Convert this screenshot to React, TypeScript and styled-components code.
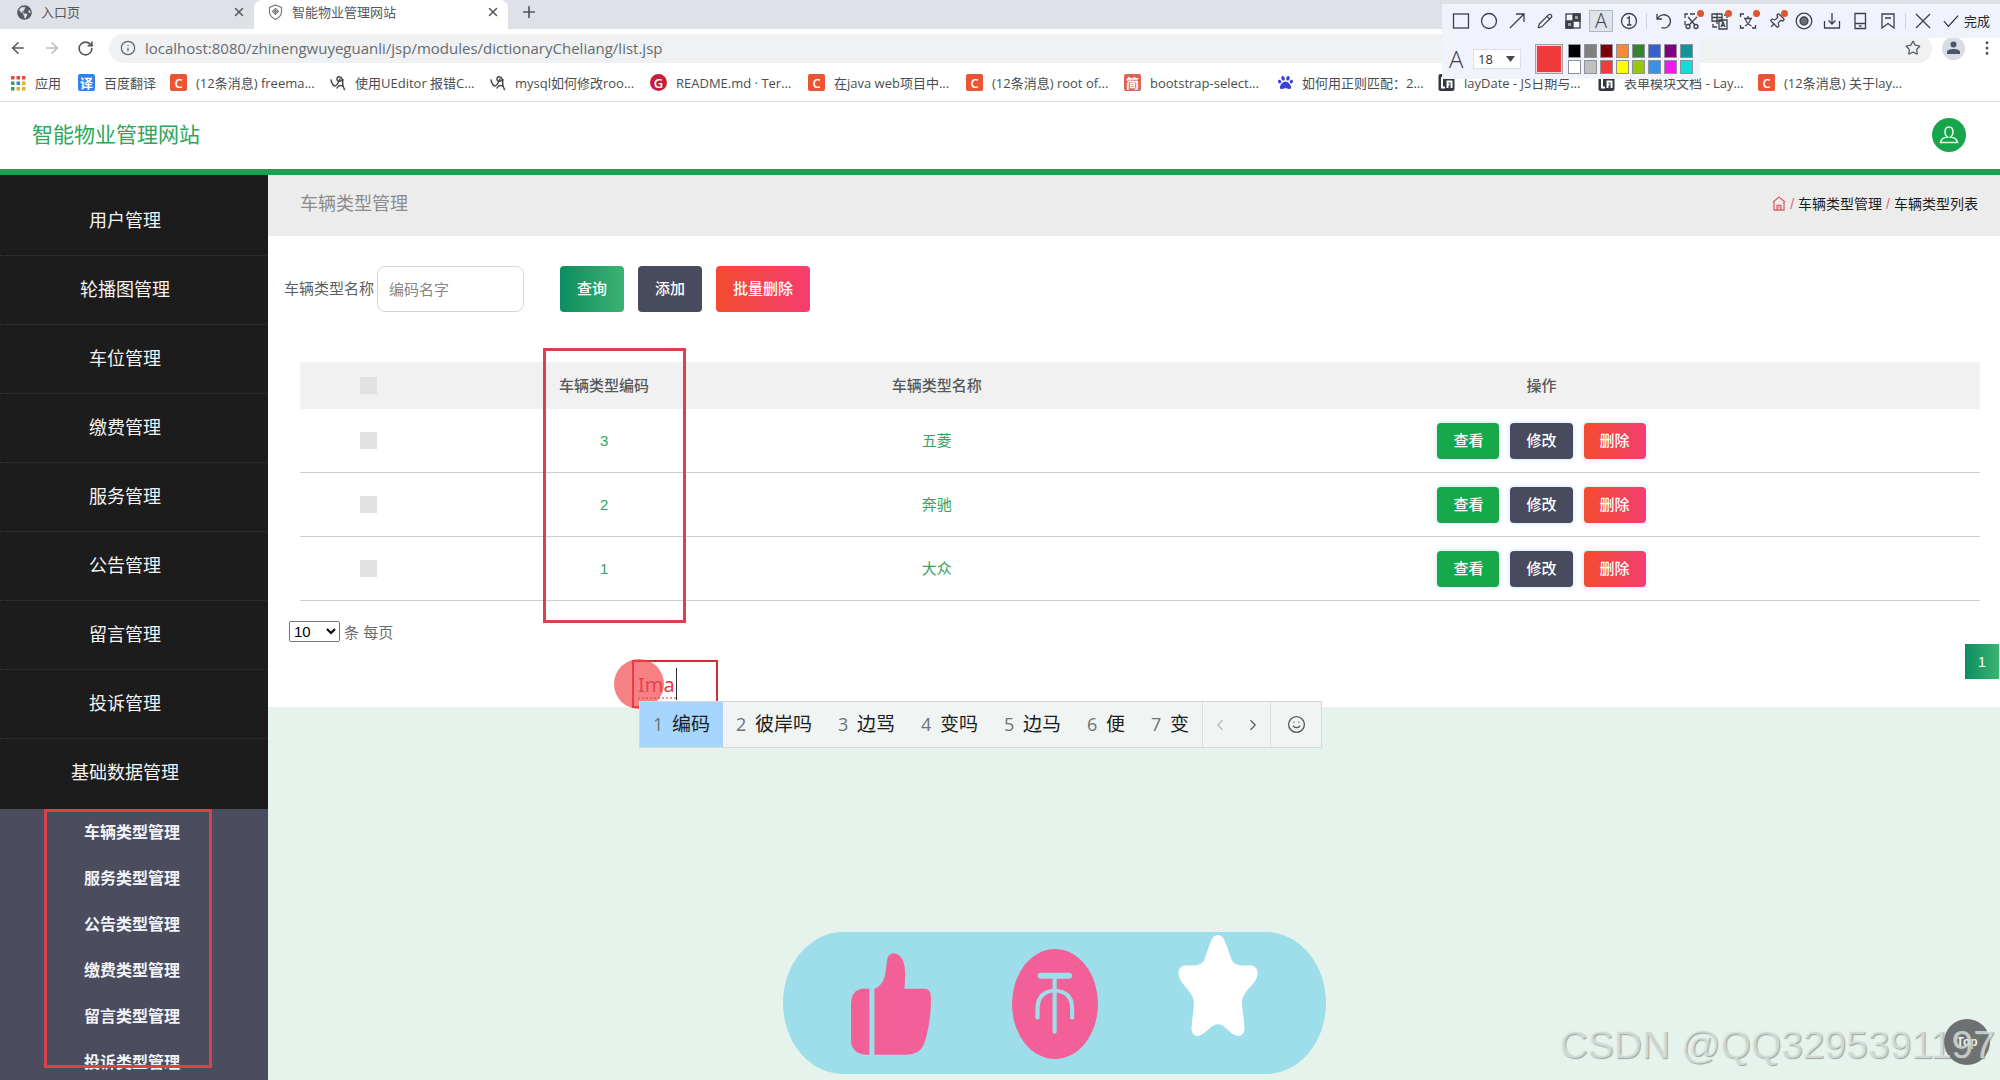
import React from 'react';
import styled, { createGlobalStyle, css } from 'styled-components';
import { ArrowLeft, ArrowRight, RotateCw, Info, X, Plus, Star, Pencil, Smile, ChevronLeft, ChevronRight, Pin, MoreVertical } from 'lucide-react';
import { FaPaw, FaGlobeAmericas } from 'react-icons/fa';

const siteFont = '"Liberation Sans", "Noto Sans CJK SC", sans-serif';
const chromeFont = '"Open Sans", "Noto Sans CJK SC", sans-serif';

const GlobalStyle = createGlobalStyle`
  * { box-sizing: border-box; }
  body { margin: 0; background: #e5f3ec; font-family: ${siteFont}; }
  button, input, select { font-family: inherit; margin: 0; }
  button { border: 0; padding: 0; background: none; cursor: pointer; }
  a { text-decoration: none; color: inherit; }
  ul { list-style: none; margin: 0; padding: 0; }
  svg { display: block; flex: none; }
`;

const Shell = styled.div`
  position: relative;
  display: flex;
  flex-direction: column;
  height: 100vh;
  overflow: hidden;
`;

/* ---------- browser ---------- */
const Browser = styled.header`
  flex: none;
  background: #fff;
  border-bottom: 1px solid #d9dbde;
  font-family: ${chromeFont};
`;
const TabStrip = styled.div`
  display: flex;
  height: 29px;
  background: #dee1e6;
`;
const Tab = styled.div<{ $active?: boolean }>`
  display: flex;
  align-items: center;
  gap: 9px;
  width: 254px;
  height: 29px;
  padding: 0 8px 5px 17px;
  font-size: 13px;
  line-height: 20px;
  color: #55585c;
  border-radius: 0 0 8px 0;
  ${p => p.$active && css`background: #fff; border-radius: 8px 8px 0 0; padding-left: 14px;`}
`;
const TabTitle = styled.span`
  flex: 1;
`;
const IconButton = styled.button`
  display: flex;
  align-items: center;
  justify-content: center;
  color: #54575b;
`;
const NewTab = styled(IconButton)`
  padding: 0 12px 5px;
`;
const Toolbar = styled.div`
  display: flex;
  align-items: center;
  gap: 16px;
  height: 34px;
  padding: 4px 4px 0 9px;
`;
const Address = styled.label`
  flex: 1;
  display: flex;
  align-items: center;
  gap: 9px;
  height: 29px;
  margin: 0 -6px 0 -1px;
  padding: 0 11px;
  border-radius: 15px;
  background: #eff1f3;
  color: #5f6368;
`;
const AddressInput = styled.input`
  flex: 1;
  border: 0;
  padding: 0;
  outline: 0;
  background: none;
  font-size: 15px;
  line-height: 24px;
  color: #686b6f;
`;
const Profile = styled.button`
  display: flex;
  align-items: center;
  justify-content: center;
  width: 23px;
  height: 23px;
  margin-right: -3px;
  border-radius: 50%;
  background: #d9dce4;
`;
const Bookmarks = styled.nav`
  display: flex;
  align-items: center;
  height: 38px;
  padding: 1px 0 0 10px;
`;
const Bookmark = styled.a<{ $width: number }>`
  flex: none;
  display: flex;
  align-items: center;
  gap: 9px;
  width: ${p => p.$width}px;
  font-size: 13px;
  line-height: 20px;
  white-space: nowrap;
  color: #4a4d51;
`;
const Favicon = styled.span<{ $bg: string; $round?: boolean }>`
  flex: none;
  display: flex;
  align-items: center;
  justify-content: center;
  width: 17px;
  height: 17px;
  border-radius: ${p => (p.$round ? '50%' : '2px')};
  background: ${p => p.$bg};
  color: #fff;
  font-size: 13px;
  line-height: 16px;
  font-weight: 600;
`;

/* ---------- site header ---------- */
const SiteHeader = styled.header`
  flex: none;
  display: flex;
  align-items: center;
  justify-content: space-between;
  height: 73px;
  padding: 0 34px 2px 32px;
  background: #fff;
  border-bottom: 6px solid #1fa152;
`;
const Brand = styled.a`
  font-size: 21px;
  line-height: 30px;
  color: #2ca75b;
`;
const UserButton = styled.button`
  display: flex;
  align-items: center;
  justify-content: center;
  width: 34px;
  height: 34px;
  border-radius: 50%;
  background: #17a54b;
`;
const Body = styled.div`
  flex: 1;
  min-height: 0;
  display: grid;
  grid-template-columns: 268px 1fr;
`;

/* ---------- sidebar ---------- */
const Sidebar = styled.nav`
  background: #4b4c5e;
  overflow: hidden;
`;
const Menu = styled.ul`
  padding: 12px 0 1px;
  background: #1c1c1c;
`;
const MenuItem = styled.li`
  border-bottom: 1px dotted #383838;
  &:last-child { border-bottom-color: transparent; }
`;
const MenuLink = styled.a`
  display: block;
  padding: 20px 18px 20px 0;
  font-size: 18px;
  line-height: 28px;
  text-align: center;
  color: #f4f4f4;
`;
const SubMenu = styled.ul`
  position: relative;
`;
const SubLink = styled.a`
  display: block;
  padding: 12px 4px 10px 0;
  font-size: 16px;
  line-height: 24px;
  font-weight: 700;
  text-align: center;
  color: #f1f3f8;
`;
const Marker = styled.span<{ $x: number; $y: number; $w: number; $h: number }>`
  position: absolute;
  left: ${p => p.$x}px;
  top: ${p => p.$y}px;
  width: ${p => p.$w}px;
  height: ${p => p.$h}px;
  border: 3px solid #d8434b;
  pointer-events: none;
`;

/* ---------- content ---------- */
const Main = styled.main`
  min-width: 0;
`;
const Crumbs = styled.div`
  display: flex;
  align-items: center;
  justify-content: space-between;
  height: 61px;
  padding: 0 22px 4px 32px;
  background: #ececec;
`;
const PageTitle = styled.h1`
  margin: 0;
  font-size: 18px;
  line-height: 26px;
  font-weight: 400;
  color: #8b8b8b;
`;
const Trail = styled.nav`
  display: flex;
  align-items: center;
  gap: 4px;
  font-size: 14px;
  line-height: 20px;
  color: #1d1d1d;
`;
const Slash = styled.span`
  color: #e2646c;
`;
const Panel = styled.section`
  padding-top: 30px;
  background: #fff;
`;
const SearchForm = styled.form`
  display: flex;
  align-items: center;
  gap: 14px;
  padding-left: 16px;
`;
const Field = styled.div`
  display: flex;
  align-items: center;
  gap: 3px;
  margin-right: 22px;
  font-size: 15px;
  line-height: 22px;
  color: #5a5e62;
`;
const TextInput = styled.input`
  width: 147px;
  height: 46px;
  padding: 0 11px;
  border: 1px solid #d3d6d9;
  border-radius: 8px;
  font-size: 15px;
  outline: 0;
  &::placeholder { color: #868686; }
`;
type Tone = 'teal' | 'green' | 'slate' | 'red';
const tones: Record<Tone, string> = {
  teal: 'linear-gradient(90deg, #0c8d61, #3cb371)',
  green: '#17a84a',
  slate: '#484b5e',
  red: 'linear-gradient(90deg, #f44a30, #f53e70)',
};
const Button = styled.button<{ $tone: Tone; $small?: boolean }>`
  height: ${p => (p.$small ? 36 : 46)}px;
  padding: 0 ${p => (p.$small ? 16 : 17)}px;
  border-radius: 4px;
  background: ${p => tones[p.$tone]};
  color: #fff;
  font-size: 15px;
  line-height: 22px;
  font-weight: 500;
  ${p => p.$small && css`box-shadow: 0 0 5px #bfe3f5;`}
`;
const TableWrap = styled.div`
  position: relative;
  margin: 50px 20px 0 32px;
`;
const Table = styled.table`
  width: 100%;
  table-layout: fixed;
  border-collapse: separate;
  border-spacing: 0;
  font-size: 15px;
  line-height: 22px;
  text-align: center;
`;
const Th = styled.th<{ $width?: string }>`
  width: ${p => p.$width || 'auto'};
  height: 47px;
  padding: 0;
  background: #f1f1f2;
  font-weight: 500;
  color: #55585b;
`;
const Td = styled.td`
  height: 64px;
  padding: 0;
  border-bottom: 1px solid #cdcfd1;
  color: #34a461;
`;
const Tick = styled.input`
  display: block;
  appearance: none;
  width: 17px;
  height: 17px;
  margin: 0 auto;
  background: #dfe1e3;
`;
const Actions = styled.div`
  display: flex;
  justify-content: center;
  gap: 11px;
`;
const Pager = styled.div`
  padding: 19px 1px 28px 21px;
`;
const PageSize = styled.label`
  display: flex;
  align-items: center;
  gap: 4px;
  height: 22px;
  margin-bottom: 2px;
  font-size: 15px;
  color: #6a6d70;
`;
const SizeSelect = styled.select`
  width: 51px;
  height: 21px;
  font-size: 15px;
  line-height: 18px;
  font-family: "Liberation Sans", sans-serif;
`;
const PageNumber = styled.button`
  display: block;
  width: 34px;
  height: 35px;
  margin-left: auto;
  background: ${tones.teal};
  color: #fff;
  font-size: 14px;
`;

/* ---------- capture tool ---------- */
const Capture = styled.div`
  position: absolute;
  top: 4px;
  right: 0;
  width: 558px;
  font-family: ${chromeFont};
`;
const CaptureRow = styled.div`
  display: flex;
  align-items: center;
  height: 34px;
  padding-left: 5px;
  background: #f0f3fc;
`;
const Tool = styled.button<{ $on?: boolean; $badge?: boolean }>`
  position: relative;
  display: flex;
  align-items: center;
  justify-content: center;
  width: 24px;
  height: 22px;
  margin: 0 2px;
  color: #3d4047;
  font-size: 20px;
  line-height: 20px;
  font-weight: 300;
  ${p => p.$on && css`background: #dfe3ea; border: 1px solid #b4b8bf;`}
  ${p => p.$badge && css`
    &::after {
      content: '';
      position: absolute;
      top: 0;
      right: 0;
      width: 7px;
      height: 7px;
      border-radius: 50%;
      background: #e2562b;
    }
  `}
`;
const ToolDivider = styled.span`
  width: 1px;
  height: 16px;
  margin: 0 3px;
  background: #cfd3dc;
`;
const Done = styled.button`
  display: flex;
  align-items: center;
  gap: 5px;
  margin-left: 6px;
  font-size: 13px;
  line-height: 20px;
  color: #26282c;
  white-space: nowrap;
`;
const StylePanel = styled.div`
  display: flex;
  align-items: center;
  width: 258px;
  height: 41px;
  padding-left: 7px;
  background: #f0f3fc;
`;
const StyleLetter = styled.span`
  width: 24px;
  font-size: 24px;
  line-height: 28px;
  font-weight: 300;
  color: #3d4047;
`;
const FontSelectBox = styled.span`
  position: relative;
  display: flex;
  align-items: center;
  margin-right: 14px;
  & > svg { position: absolute; right: 6px; pointer-events: none; }
`;
const FontSelect = styled.select`
  appearance: none;
  width: 48px;
  height: 20px;
  padding: 0 4px;
  border: 1px solid #dcdfe6;
  background: #fff;
  font-size: 13px;
  color: #303338;
`;
const CurrentColor = styled.button`
  width: 28px;
  height: 30px;
  margin-right: 5px;
  border: 1px solid #9ea2a8;
  background: #f13a3c;
  box-shadow: inset 0 0 0 1px #f0d6da;
`;
const Palette = styled.div`
  display: grid;
  grid-template-columns: repeat(8, 13px);
  gap: 2px 3px;
`;
const Swatch = styled.button<{ $color: string }>`
  height: 14px;
  border: 1px solid #8f9298;
  background: ${p => p.$color};
`;

/* ---------- typing annotation ---------- */
const Typing = styled.div`
  position: absolute;
  left: 632px;
  top: 660px;
  display: flex;
  width: 86px;
  height: 48px;
  padding: 6px 0 0 4px;
  border: 2px solid #dc2a30;
`;
const Pointer = styled.span`
  position: absolute;
  left: 614px;
  top: 659px;
  width: 50px;
  height: 50px;
  border-radius: 50%;
  background: rgba(240, 70, 75, 0.68);
`;
const TypingInput = styled.input`
  width: 38px;
  height: 31px;
  padding: 3px 0 0;
  border: 0;
  border-bottom: 2px dotted #ee8f90;
  outline: 0;
  background: none;
  font-family: "Noto Sans", sans-serif;
  font-size: 20px;
  line-height: 26px;
  color: #e0393e;
`;
const Caret = styled.span`
  width: 1px;
  height: 32px;
  background: #333;
`;
const Ime = styled.div`
  position: absolute;
  left: 639px;
  top: 701px;
  display: flex;
  height: 47px;
  border: 1px solid #d4d9d7;
  background: #f0f4f2;
  font-family: ${chromeFont};
`;
const Candidate = styled.button<{ $on?: boolean }>`
  display: flex;
  align-items: center;
  gap: 9px;
  padding: 0 13px 1px;
  font-size: 19px;
  line-height: 28px;
  color: #1b1d1f;
  background: ${p => (p.$on ? '#a6d5fd' : 'transparent')};
`;
const Order = styled.span`
  width: 10px;
  font-size: 18px;
  color: #6b7377;
`;
const ImeTools = styled.div`
  display: flex;
  align-items: center;
  justify-content: space-around;
  border-left: 1px solid #d9dddb;
  width: 68px;
  &:last-child { width: 51px; }
`;

/* ---------- floating reactions ---------- */
const Reactions = styled.div`
  position: absolute;
  left: 783px;
  bottom: 6px;
  display: flex;
  align-items: flex-start;
  justify-content: space-between;
  width: 543px;
  height: 142px;
  padding: 3px 68px 0;
  border-radius: 60px / 71px;
  background: #9eddea;
`;
const Reaction = styled.button<{ $drop: number }>`
  padding-top: ${p => p.$drop}px;
`;
const TopButton = styled.button`
  position: absolute;
  right: 10px;
  bottom: 15px;
  width: 46px;
  height: 46px;
  border-radius: 50%;
  background: #6e7171;
  color: #f2f2f2;
  font-size: 12px;
  font-weight: 700;
`;
const Watermark = styled.span`
  position: absolute;
  right: 5px;
  bottom: 12px;
  font-size: 39px;
  line-height: 46px;
  white-space: nowrap;
  color: rgba(229, 238, 234, 0.7);
  text-shadow: 1px 1px 1px rgba(130, 138, 134, 0.75);
  pointer-events: none;
`;

const Line = ({ children, w = 18 }: { children: React.ReactNode; w?: number }) => (
  <svg width={w} height={18} viewBox="0 0 18 18" fill="none" stroke="currentColor" strokeWidth="1.3">{children}</svg>
);

const Swirl = () => (
  <svg width="16" height="16" viewBox="0 0 16 16" fill="none" stroke="#4b4b4b" strokeWidth="1.5" strokeLinecap="round">
    <path d="M1 5c1 4 2 6 4 6s3-3 5-7" />
    <path d="M12 4c-1-3-5-3-5 0s4 3 6 0c-1 5 0 8 1.500 10.500" />
    <path d="M13 11c-3-1-5 0-6 2" />
  </svg>
);

const LayIcon = () => (
  <svg width="17" height="17" viewBox="0 0 16 17">
    <rect width="16" height="17" rx="2" fill="#34373c" />
    <path d="M3.500 3v10.500h3M9 14V7.500h4V14M9 10.500h2" fill="none" stroke="#fff" strokeWidth="2" />
  </svg>
);

const appsColors = ['#de4a3e', '#de4a3e', '#de4a3e', '#3f9b5a', '#3b7de0', '#e2b032', '#3f9b5a', '#e2b032', '#e2b032'];
const AppsIcon = () => (
  <svg width="16" height="16" viewBox="0 0 16 16">
    {appsColors.map((c, i) => (
      <rect key={i} x={1 + (i % 3) * 5.500} y={1 + Math.floor(i / 3) * 5.500} width="3.500" height="3.500" fill={c} />
    ))}
  </svg>
);

const C = () => <Favicon $bg="#ea5535">C</Favicon>;

const bookmarks: { icon: React.ReactNode; text: string; width: number }[] = [
  { icon: <AppsIcon />, text: '应用', width: 68 },
  { icon: <Favicon $bg="#2f83ea">译</Favicon>, text: '百度翻译', width: 92 },
  { icon: <C />, text: '(12条消息) freema...', width: 160 },
  { icon: <Swirl />, text: '使用UEditor 报错C...', width: 160 },
  { icon: <Swirl />, text: 'mysql如何修改roo...', width: 160 },
  { icon: <Favicon $bg="#c4203a" $round>G</Favicon>, text: 'README.md · Ter...', width: 158 },
  { icon: <C />, text: '在java web项目中...', width: 158 },
  { icon: <C />, text: '(12条消息) root of...', width: 158 },
  { icon: <Favicon $bg="#dd6356">简</Favicon>, text: 'bootstrap-select...', width: 154 },
  { icon: <FaPaw size={15} color="#3a40d8" />, text: '如何用正则匹配：2...', width: 160 },
  { icon: <LayIcon />, text: 'layDate - JS日期与...', width: 160 },
  { icon: <LayIcon />, text: '表单模块文档 - Lay...', width: 160 },
  { icon: <C />, text: '(12条消息) 关于lay...', width: 160 },
];

const menu = ['用户管理', '轮播图管理', '车位管理', '缴费管理', '服务管理', '公告管理', '留言管理', '投诉管理', '基础数据管理'];
const submenu = ['车辆类型管理', '服务类型管理', '公告类型管理', '缴费类型管理', '留言类型管理', '投诉类型管理'];
const rows = [
  { code: '3', name: '五菱' },
  { code: '2', name: '奔驰' },
  { code: '1', name: '大众' },
];
const palette = [
  '#000000', '#808080', '#7b0008', '#f88a35', '#33842c', '#3460d2', '#800080', '#12939a',
  '#ffffff', '#bfbfbf', '#f13a3c', '#ffff00', '#98c80c', '#3893e6', '#f418f0', '#14dcd8',
];
const candidates = ['编码', '彼岸吗', '边骂', '变吗', '边马', '便', '变'];

const BrowserChrome = () => (
  <Browser>
    <TabStrip>
      <Tab>
        <FaGlobeAmericas size={15} />
        <TabTitle>入口页</TabTitle>
        <IconButton aria-label="关闭"><X size={14} strokeWidth={2.500} /></IconButton>
      </Tab>
      <Tab $active>
        <svg width="15" height="16" viewBox="0 0 15 16" fill="none" stroke="#777a7e" strokeWidth="1.200">
          <path d="M7.500 1 13.500 3.500V8c0 4-3 6-6 7.500C4.500 14 1.500 12 1.500 8V3.500Z" />
          <path d="M7.500 4.500 10.500 7.500 7.500 10.500 4.500 7.500ZM7.500 6v3M6 7.500h3" />
        </svg>
        <TabTitle>智能物业管理网站</TabTitle>
        <IconButton aria-label="关闭"><X size={14} strokeWidth={2.500} /></IconButton>
      </Tab>
      <NewTab aria-label="新标签页"><Plus size={18} strokeWidth={2.300} /></NewTab>
    </TabStrip>
    <Toolbar>
      <IconButton aria-label="后退"><ArrowLeft size={18} /></IconButton>
      <IconButton aria-label="前进"><ArrowRight size={18} color="#b9bbbe" /></IconButton>
      <IconButton aria-label="刷新"><RotateCw size={17} strokeWidth={2.300} /></IconButton>
      <Address>
        <Info size={16} strokeWidth={1.800} />
        <AddressInput aria-label="地址" defaultValue="localhost:8080/zhinengwuyeguanli/jsp/modules/dictionaryCheliang/list.jsp" />
        <Star size={16} />
      </Address>
      <Profile aria-label="用户">
        <svg width="13" height="14" viewBox="0 0 13 14" fill="#4c5568"><circle cx="6.500" cy="3.500" r="3" /><path d="M0 13V11c0-2 3-3 6.500-3s6.500 1 6.500 3v2Z" /></svg>
      </Profile>
      <IconButton aria-label="更多"><MoreVertical size={18} fill="currentColor" /></IconButton>
    </Toolbar>
    <Bookmarks>
      {bookmarks.map((b, i) => (
        <Bookmark key={i} href="#" $width={b.width}>{b.icon}<span>{b.text}</span></Bookmark>
      ))}
    </Bookmarks>
  </Browser>
);

const CaptureTools = () => (
  <Capture>
    <CaptureRow>
      <Tool aria-label="矩形"><Line><rect x="1.500" y="2" width="15" height="14" /></Line></Tool>
      <Tool aria-label="椭圆"><Line><circle cx="9" cy="9" r="7.500" /></Line></Tool>
      <Tool aria-label="箭头"><Line><path d="M2 16 16 2M8 2h8v8" /></Line></Tool>
      <Tool aria-label="画笔"><Pencil size={16} strokeWidth={1.800} /></Tool>
      <Tool aria-label="马赛克"><Line><rect x="2" y="2" width="14" height="14" /><path d="M9 2h7v7H9ZM2 9h7v7H2Z" fill="currentColor" /><path d="M11 4h3v3h-3ZM4 11h3v3H4Z" fill="#9a9da4" stroke="none" /></Line></Tool>
      <Tool $on>A</Tool>
      <Tool aria-label="序号"><Line><circle cx="9" cy="9" r="7.500" /><path d="M7 6.500 9.300 5v8M7 13h4.500" /></Line></Tool>
      <ToolDivider />
      <Tool aria-label="撤销"><Line><path d="M2 2v5h5M2.500 6.500C5 2.500 10 1.500 13.500 4.500c3 3 2.500 8-1 10.500-2 1.300-4 1.300-6 .5" /></Line></Tool>
      <Tool $badge aria-label="裁剪"><Line><path d="M2 6V2h3M2 9v4M7 2h5M5 5l7 8M14 5l-8 8" /><circle cx="5" cy="14.500" r="2" /><circle cx="13" cy="14.500" r="2" /></Line></Tool>
      <Tool $badge aria-label="翻译"><Line><path d="M1 2h10v7H1ZM6 1v11M1 5.500h10M8 8h8v9H8ZM10 15l2-5 2 5M11 13.500h2M2 12v3h4M13 3h3v3" /></Line></Tool>
      <Tool $badge aria-label="文字识别"><Line><path d="M1.500 5V2H5M1.500 13v3H5M16.500 13v3H13M5 6.500h8M9 4v2.500M6 14c3-1.500 5-4 5.500-7.500M6.500 7c.5 3 3 5.500 6 7" /></Line></Tool>
      <Tool $badge aria-label="固定"><Pin size={17} strokeWidth={1.700} transform="rotate(45)" /></Tool>
      <Tool aria-label="录制"><Line><circle cx="9" cy="9" r="7.800" /><circle cx="9" cy="9" r="4" fill="#6c6f75" /></Line></Tool>
      <Tool aria-label="下载"><Line><path d="M9 1v11M5.500 8.500 9 12l3.500-3.500M1.500 9v7h15V9" /></Line></Tool>
      <Tool aria-label="手机"><Line><path d="M4 1.500h10.500v15H4ZM4 11.500h10.500M8 14h2.500" /></Line></Tool>
      <Tool aria-label="收藏"><Line><path d="M3 2h12v14l-6-4.500L3 16ZM6 6h6" /></Line></Tool>
      <ToolDivider />
      <Tool aria-label="取消"><Line><path d="m2 2 14 14M16 2 2 16" /></Line></Tool>
      <Done><Line w={16}><path d="m1 9 5 6L17 3" /></Line>完成</Done>
    </CaptureRow>
    <StylePanel>
      <StyleLetter>A</StyleLetter>
      <FontSelectBox>
        <FontSelect aria-label="字号" defaultValue="18"><option>18</option></FontSelect>
        <svg width="9" height="6" viewBox="0 0 9 6"><path d="M0 0h9L4.500 6Z" fill="#44474c" /></svg>
      </FontSelectBox>
      <CurrentColor aria-label="当前颜色" />
      <Palette>
        {palette.map(c => <Swatch key={c} $color={c} aria-label={c} />)}
      </Palette>
    </StylePanel>
  </Capture>
);

const SideNav = () => (
  <Sidebar>
    <Menu>
      {menu.map(m => <MenuItem key={m}><MenuLink href="#">{m}</MenuLink></MenuItem>)}
    </Menu>
    <SubMenu>
      {submenu.map(m => <li key={m}><SubLink href="#">{m}</SubLink></li>)}
      <Marker $x={44} $y={0} $w={168} $h={259} />
    </SubMenu>
  </Sidebar>
);

const Content = () => (
  <Main>
    <Crumbs>
      <PageTitle>车辆类型管理</PageTitle>
      <Trail>
        <svg width="14" height="15" viewBox="0 0 14 15" fill="none" stroke="#d9636b" strokeWidth="1.300">
          <path d="M1 6 7 1l6 5M2 5.500V14h10V5.500M5 14V9.500h4V14M7 11v1.500" />
        </svg>
        <Slash>/</Slash><a href="#">车辆类型管理</a><Slash>/</Slash><a href="#">车辆类型列表</a>
      </Trail>
    </Crumbs>
    <Panel>
      <SearchForm onSubmit={e => e.preventDefault()}>
        <Field>
          <label htmlFor="type-name">车辆类型名称</label>
          <TextInput id="type-name" placeholder="编码名字" />
        </Field>
        <Button type="submit" $tone="teal">查询</Button>
        <Button type="button" $tone="slate">添加</Button>
        <Button type="button" $tone="red">批量删除</Button>
      </SearchForm>
      <TableWrap>
        <Table>
          <thead>
            <tr>
              <Th $width="8.2%"><Tick type="checkbox" aria-label="全选" /></Th>
              <Th $width="19.8%">车辆类型编码</Th>
              <Th $width="19.8%">车辆类型名称</Th>
              <Th>操作</Th>
            </tr>
          </thead>
          <tbody>
            {rows.map(r => (
              <tr key={r.code}>
                <Td><Tick type="checkbox" aria-label={r.name} /></Td>
                <Td>{r.code}</Td>
                <Td>{r.name}</Td>
                <Td>
                  <Actions>
                    <Button $small $tone="green">查看</Button>
                    <Button $small $tone="slate">修改</Button>
                    <Button $small $tone="red">删除</Button>
                  </Actions>
                </Td>
              </tr>
            ))}
          </tbody>
        </Table>
        <Marker $x={243} $y={-14} $w={143} $h={275} />
      </TableWrap>
      <Pager>
        <PageSize>
          <SizeSelect defaultValue="10"><option>10</option><option>25</option></SizeSelect>
          条 每页
        </PageSize>
        <PageNumber>1</PageNumber>
      </Pager>
    </Panel>
  </Main>
);

const ReactionBar = () => (
  <Reactions>
    <Reaction $drop={18} aria-label="点赞">
      <svg width="80" height="102" viewBox="240 126 208 306" preserveAspectRatio="none" fill="#f26097">
        <path d="M288 233H272C252 233 240 252 240 280V388C240 414 256 431 278 431H288Z" />
        <path d="M301 233C320 225 328 207 331 175L334 147C337 120 363 120 374 146C383 168 381 200 379 233H432C444 233 448 245 448 262C448 310 442 356 432 392C424 420 407 431 382 431H301Z" />
      </svg>
    </Reaction>
    <Reaction $drop={14} aria-label="投币">
      <svg width="86" height="110" viewBox="659 115 226 328" preserveAspectRatio="none">
        <ellipse cx="772" cy="279" rx="113" ry="164" fill="#f26097" />
        <path d="M735 195H808" stroke="#9eddea" strokeWidth="18" strokeLinecap="round" />
        <path d="M771 196V362M726 320V290C728 255 745 240 771 239C799 240 816 255 817 290V320" fill="none" stroke="#9eddea" strokeWidth="11" strokeLinecap="round" />
      </svg>
    </Reaction>
    <Reaction $drop={0} aria-label="收藏">
      <svg width="80" height="102" viewBox="1094 74 208 304" preserveAspectRatio="none" fill="#fff">
        <path d="M1182 86C1190 70 1206 70 1213 86C1222 108 1228 130 1234 150C1242 166 1262 166 1282 164C1300 165 1306 186 1296 208C1284 230 1262 246 1260 272C1261 300 1266 325 1267 352C1266 374 1252 380 1238 370C1222 357 1212 340 1198 340C1184 340 1174 357 1158 369C1144 380 1130 376 1129 352C1130 325 1136 300 1135 272C1132 246 1112 230 1100 208C1090 186 1096 165 1114 164C1134 166 1154 166 1162 150C1168 130 1174 108 1182 86Z" />
      </svg>
    </Reaction>
  </Reactions>
);

export default function App() {
  return (
    <Shell>
      <GlobalStyle />
      <BrowserChrome />
      <SiteHeader>
        <Brand href="#">智能物业管理网站</Brand>
        <UserButton aria-label="个人中心">
          <svg width="20" height="20" viewBox="0 0 20 20" fill="none" stroke="#dff5e6" strokeWidth="1.600">
            <path d="M10 2c-3 0-4 2.500-4 5 0 2 1 4 2.300 5C5 12.500 2 14.500 1.500 17.500h17C18 14.500 15 12.500 11.700 12 13 11 14 9 14 7c0-2.500-1-5-4-5Z" />
          </svg>
        </UserButton>
      </SiteHeader>
      <Body>
        <SideNav />
        <Content />
      </Body>
      <Typing>
        <TypingInput aria-label="标注文字" defaultValue="Ima" spellCheck={false} />
        <Caret />
      </Typing>
      <Pointer />
      <Ime>
        {candidates.map((c, i) => (
          <Candidate key={c} $on={i === 0}><Order>{i + 1}</Order>{c}</Candidate>
        ))}
        <ImeTools>
          <IconButton aria-label="上一页"><ChevronLeft size={18} strokeWidth={1.500} color="#b3b8b6" /></IconButton>
          <IconButton aria-label="下一页"><ChevronRight size={18} strokeWidth={1.500} /></IconButton>
        </ImeTools>
        <ImeTools>
          <IconButton aria-label="表情"><Smile size={19} strokeWidth={1.700} /></IconButton>
        </ImeTools>
      </Ime>
      <ReactionBar />
      <TopButton>Top</TopButton>
      <Watermark>CSDN @QQ3295391197</Watermark>
      <CaptureTools />
    </Shell>
  );
}
